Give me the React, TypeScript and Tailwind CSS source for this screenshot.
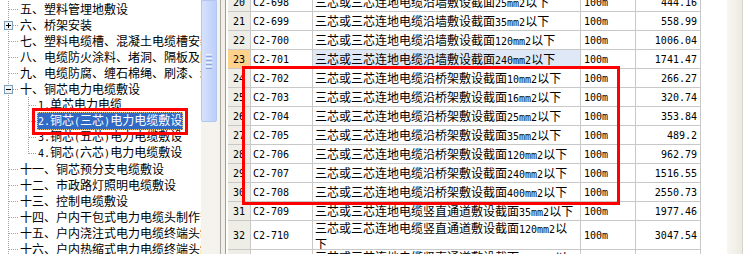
import React from 'react';

type TreeItem = { t: string; lv: 0 | 1; box?: '+' | '-'; sel?: boolean; last?: boolean };
type GridRow = { no: number; code: string; name: string; unit: string; price: string; tall?: boolean };

const TREE: TreeItem[] = [
  { t: '五、塑料管埋地敷设', lv: 0 },
  { t: '六、桥架安装', lv: 0, box: '+' },
  { t: '七、塑料电缆槽、混凝土电缆槽安装', lv: 0 },
  { t: '八、电缆防火涂料、堵洞、隔板及阻燃槽盒安装', lv: 0 },
  { t: '九、电缆防腐、缠石棉绳、刷漆、剥皮', lv: 0 },
  { t: '十、铜芯电力电缆敷设', lv: 0, box: '-' },
  { t: '1.单芯电力电缆', lv: 1 },
  { t: '2.铜芯(三芯)电力电缆敷设', lv: 1, sel: true },
  { t: '3.铜芯(五芯)电力电缆敷设', lv: 1 },
  { t: '4.铜芯(六芯)电力电缆敷设', lv: 1, last: true },
  { t: '十一、铜芯预分支电缆敷设', lv: 0 },
  { t: '十二、市政路灯照明电缆敷设', lv: 0 },
  { t: '十三、控制电缆敷设', lv: 0 },
  { t: '十四、户内干包式电力电缆头制作安装', lv: 0 },
  { t: '十五、户内浇注式电力电缆终端头制作安装', lv: 0 },
  { t: '十六、户内热缩式电力电缆终端头制作安装', lv: 0 },
];

const WALL = '三芯或三芯连地电缆沿墙敷设截面';
const TRAY = '三芯或三芯连地电缆沿桥架敷设截面';
const SHAFT = '三芯或三芯连地电缆竖直通道敷设截面';

const ROWS: GridRow[] = [
  { no: 20, code: 'C2-698', name: WALL + '25mm2以下', unit: '100m', price: '444.16' },
  { no: 21, code: 'C2-699', name: WALL + '35mm2以下', unit: '100m', price: '558.99' },
  { no: 22, code: 'C2-700', name: WALL + '120mm2以下', unit: '100m', price: '1006.04' },
  { no: 23, code: 'C2-701', name: WALL + '240mm2以下', unit: '100m', price: '1741.47' },
  { no: 24, code: 'C2-702', name: TRAY + '10mm2以下', unit: '100m', price: '266.27' },
  { no: 25, code: 'C2-703', name: TRAY + '16mm2以下', unit: '100m', price: '320.74' },
  { no: 26, code: 'C2-704', name: TRAY + '25mm2以下', unit: '100m', price: '353.84' },
  { no: 27, code: 'C2-705', name: TRAY + '35mm2以下', unit: '100m', price: '489.2' },
  { no: 28, code: 'C2-706', name: TRAY + '120mm2以下', unit: '100m', price: '962.79' },
  { no: 29, code: 'C2-707', name: TRAY + '240mm2以下', unit: '100m', price: '1516.55' },
  { no: 30, code: 'C2-708', name: TRAY + '400mm2以下', unit: '100m', price: '2550.73' },
  { no: 31, code: 'C2-709', name: SHAFT + '35mm2以下', unit: '100m', price: '1977.46' },
  { no: 32, code: 'C2-710', name: SHAFT + '120mm2以\n下', unit: '100m', price: '3047.54', tall: true },
  { no: 33, code: 'C2-711', name: SHAFT + '240mm2以\n下', unit: '100m', price: '', tall: true },
];

// half-width runs get a mono face so they take 6px a char, like the bitmap font
function Mixed({ text }: { text: string }) {
  const parts = text.match(/[\x20-\x7e]+|[^\x20-\x7e]+/g) ?? [];
  return (
    <>
      {parts.map((p, i) =>
        /[\x20-\x7e]/.test(p[0]) ? (
          <span key={i} className="font-['DejaVu_Sans_Mono',monospace] text-[10px]">
            {p}
          </span>
        ) : (
          <span key={i}>{p}</span>
        )
      )}
    </>
  );
}

function Gutter({ item }: { item: TreeItem }) {
  const w = item.lv === 0 ? 19 : 37;
  return (
    <svg width={w} height={16} className="shrink-0">
      <g stroke="#a3a3a3" strokeDasharray="1 1">
        <line x1={8.5} y1={0} x2={8.5} y2={16} />
        {item.lv === 0 && <line x1={9} y1={8.5} x2={19} y2={8.5} />}
        {item.lv === 1 && (
          <>
            <line x1={28.5} y1={0} x2={28.5} y2={item.last ? 9 : 16} />
            <line x1={29} y1={8.5} x2={37} y2={8.5} />
          </>
        )}
      </g>
      {item.box && (
        <g>
          <rect x={4.5} y={4.5} width={8} height={8} fill="#f2f2ee" stroke="#7b9ebd" />
          <line x1={6} y1={8.5} x2={11} y2={8.5} stroke="#000" />
          {item.box === '+' && <line x1={8.5} y1={6} x2={8.5} y2={11} stroke="#000" />}
        </g>
      )}
    </svg>
  );
}

function Tree() {
  return (
    <div className="w-[201px] shrink-0 overflow-hidden bg-white pt-[1px]">
      {TREE.map((item, i) => (
        <div key={i} className="flex h-[16px] items-center whitespace-nowrap leading-[16px]">
          <Gutter item={item} />
          <span
            className={`px-[1px] ${
              item.sel
                ? 'bg-[#316ac5] text-white outline outline-1 outline-dotted outline-[#e9c57a] -outline-offset-1'
                : 'text-black'
            }`}
          >
            <Mixed text={item.t} />
          </span>
        </div>
      ))}
    </div>
  );
}

function ScrollBar() {
  return (
    <div className="flex w-[16px] shrink-0 flex-col bg-[#f4f3ee]">
      <div className="flex h-[122px] flex-col items-center justify-center gap-[1px] rounded-b-[2px] border border-[#b3c6f2] bg-gradient-to-r from-[#d6e1fc] to-[#bccffa]">
        <div className="h-[1px] w-[6px] bg-[#eef3fe]" />
        <div className="h-[1px] w-[6px] bg-[#8ca6e0]" />
        <div className="h-[1px] w-[6px] bg-[#eef3fe]" />
        <div className="h-[1px] w-[6px] bg-[#8ca6e0]" />
        <div className="h-[1px] w-[6px] bg-[#eef3fe]" />
        <div className="h-[1px] w-[6px] bg-[#8ca6e0]" />
        <div className="h-[1px] w-[6px] bg-[#eef3fe]" />
        <div className="h-[1px] w-[6px] bg-[#8ca6e0]" />
      </div>
    </div>
  );
}

function Grid() {
  return (
    <div className="w-[473px] shrink-0 overflow-hidden bg-white">
      <div className="-mt-[7px]">
        {ROWS.map((r) => (
          <div
            key={r.no}
            className={`flex border-b border-[#c8c8c8] ${r.tall ? 'h-[29px]' : 'h-[19px]'}`}
          >
            <div
              className={`flex w-[23px] shrink-0 items-center justify-center border-r border-[#c8c8c8] ${
                r.no === 23 ? 'bg-[#ffd28b]' : 'bg-[#eeede6]'
              }`}
            >
              <Mixed text={String(r.no)} />
            </div>
            <div className="flex w-[62px] shrink-0 items-center border-r border-[#c8c8c8] pl-[2px]">
              <Mixed text={r.code} />
            </div>
            <div
              className={`flex w-[268px] shrink-0 overflow-hidden whitespace-pre border-r border-[#c8c8c8] pl-[2px] ${
                r.tall ? 'items-start leading-[14px]' : 'items-center'
              } ${r.no === 23 ? 'bg-[#dfe8f6]' : ''}`}
            >
              <span>
                <Mixed text={r.name} />
              </span>
            </div>
            <div className="flex w-[55px] shrink-0 items-center border-r border-[#c8c8c8] pl-[3px]">
              <Mixed text={r.unit} />
            </div>
            <div className="flex w-[65px] shrink-0 items-center justify-end border-r border-[#c8c8c8] pr-[3px]">
              <Mixed text={r.price} />
            </div>
          </div>
        ))}
      </div>
    </div>
  );
}

export default function App() {
  return (
    <div className="relative flex h-[254px] w-[746px] overflow-hidden bg-white font-['Noto_Sans_CJK_SC',sans-serif] text-[12px] text-black">
      <Tree />
      <ScrollBar />
      {/* splitter between the two panes */}
      <div className="flex w-[11px] shrink-0">
        <div className="w-[3px] bg-[#f3f2ec]" />
        <div className="w-[1px] bg-[#a9a8a2]" />
        <div className="w-[4px] bg-[#f1efe6]" />
        <div className="w-[1px] bg-[#9c9c9c]" />
        <div className="w-[2px] bg-white" />
      </div>
      <Grid />
      <div className="w-[26px] shrink-0 bg-white" />
      <div className="w-[15px] shrink-0 bg-gradient-to-r from-[#f7f6f1] to-[#ecebe3]" />
      <div className="w-[1px] shrink-0 bg-[#d8d6cc]" />
      <div className="flex-1 bg-white" />

      {/* red annotation boxes */}
      <div className="absolute left-[32px] top-[108px] h-[27px] w-[156px] border-[3px] border-[#ff0000]" />
      <div className="absolute left-[242px] top-[66px] h-[139px] w-[378px] border-[3px] border-[#ff0000]" />
    </div>
  );
}
